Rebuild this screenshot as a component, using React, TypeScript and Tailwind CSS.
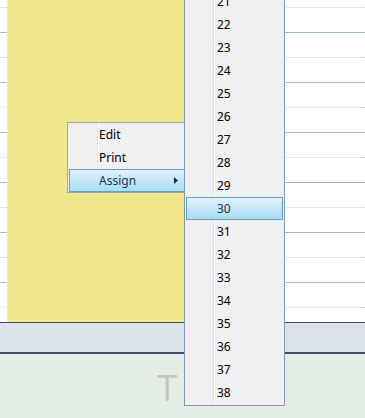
const hours = [
  "solid", "dotted", "solid", "dotted", "solid", "dotted",
  "solid", "dotted", "solid", "dotted", "solid", "dotted",
];

const numbers = Array.from({ length: 18 }, (_, i) => 21 + i);

function Highlight({ children }: { children: React.ReactNode }) {
  return (
    <div className="flex h-[23px] items-center border border-[#62a3c3] bg-gradient-to-b from-[#e2f1fb] to-[#a9dbf1] text-[#1b3550]">
      {children}
    </div>
  );
}

export default function App() {
  return (
    <div className="relative h-[418px] w-[365px] overflow-hidden bg-white font-['Noto_Sans',sans-serif] text-[12px] text-black">
      {/* day view */}
      <div className="grid h-[322px] overflow-hidden">
        <div className="col-start-1 row-start-1 flex flex-col">
          <div className="h-[8px] shrink-0 border-b border-dotted border-[#c3cfdb]" />
          {hours.map((kind, i) => (
            <div
              key={i}
              className={
                kind === "solid"
                  ? "h-[25px] shrink-0 border-b border-[#a5b8cc]"
                  : "h-[25px] shrink-0 border-b border-dotted border-[#c3cfdb]"
              }
            />
          ))}
        </div>
        <div className="col-start-1 row-start-1 flex">
          <div className="w-[7px]" />
          <div className="w-[1px] bg-[#e4e4e4]" />
          <div className="w-[240px] bg-[#f0e68c]" />
        </div>
      </div>

      <div className="h-[32px] border-t border-b-2 border-[#3d4f62] bg-[#dae1e8]" />

      <div className="h-[64px] bg-[#e4ede4] pl-[157px] pt-[14px]">
        <span className="font-['Open_Sans',sans-serif] text-[37px] leading-none text-[#c6c6c6]">T</span>
      </div>

      {/* context menu */}
      <div className="absolute left-[67px] top-[122px] w-[125px] border border-[#97a6b8] bg-[#f0f0f0] bg-[linear-gradient(to_right,transparent_29px,#e2e3e3_29px,#e2e3e3_30px,#ffffff_30px,#ffffff_31px,transparent_31px)] px-[1px]">
        <div className="flex h-[23px] items-center border border-transparent pl-[29px]">Edit</div>
        <div className="flex h-[23px] items-center border border-transparent pl-[29px]">Print</div>
        <Highlight>
          <span className="flex-1 pl-[29px]">Assign</span>
          <svg width="4" height="7" viewBox="0 0 4 7" className="mr-[11px]">
            <path d="M0 0 L4 3.5 L0 7 Z" fill="#1b2f45" />
          </svg>
        </Highlight>
      </div>

      {/* submenu */}
      <div className="absolute left-[184px] top-[-11px] w-[101px] border border-[#8397b0] bg-[#f0f0f2] bg-[linear-gradient(to_right,transparent_28px,#e2e3e3_28px,#e2e3e3_29px,#ffffff_29px,#ffffff_30px,transparent_30px)] px-[1px] pb-[1px]">
        {numbers.map((n) =>
          n === 30 ? (
            <Highlight key={n}>
              <span className="pl-[30px]">{n}</span>
            </Highlight>
          ) : (
            <div key={n} className="flex h-[23px] items-center border border-transparent pl-[30px]">
              {n}
            </div>
          )
        )}
      </div>
    </div>
  );
}
